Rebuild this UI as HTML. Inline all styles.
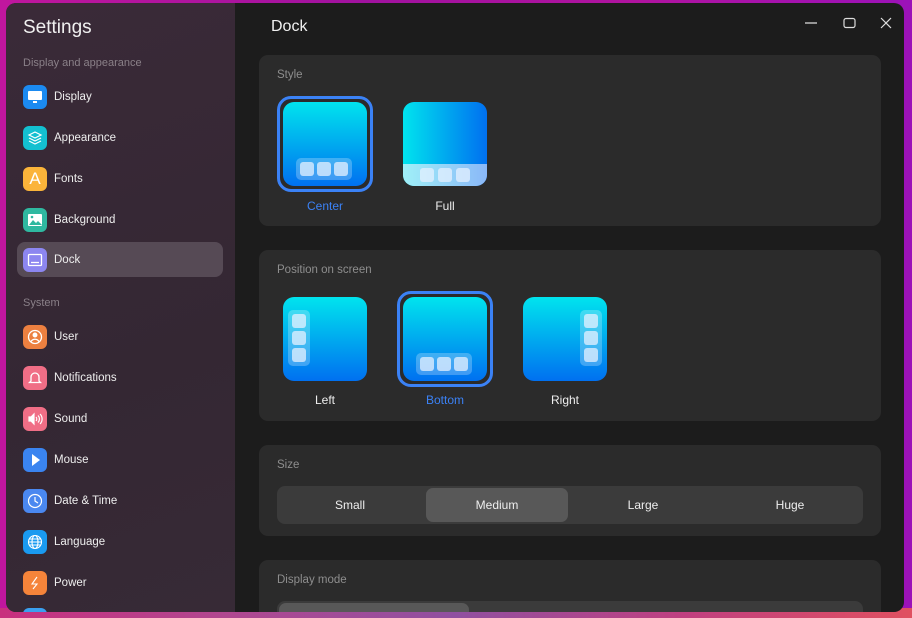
<!DOCTYPE html>
<html><head><style>
*{box-sizing:border-box;margin:0;padding:0}
body{width:912px;height:618px;overflow:hidden;font-family:"Liberation Sans","DejaVu Sans",sans-serif;background:linear-gradient(90deg,#c0169e 0%,#a0129f 40%,#b0139f 70%,#9b12b8 100%);position:relative}
.bot{position:absolute;left:0;right:0;bottom:0;height:10px;background:linear-gradient(90deg,#c8307e,#b04890,#9050a0,#c04080,#e05060)}
.win{position:absolute;left:6px;top:3px;width:898px;height:609px;border-radius:10px;overflow:hidden;background:#1c1c1c}
.side{position:absolute;left:0;top:0;width:229px;height:100%;background:linear-gradient(160deg,#3a2a38,#342733 60%,#372a36)}
.side h1{position:absolute;left:17px;top:14px;font-size:19px;font-weight:normal;color:#f0f0f0}
.sec{position:absolute;left:17px;font-size:11px;color:#8a8088}
.it{position:absolute;left:11px;width:206px;height:35px;border-radius:8px;display:flex;align-items:center;padding-left:6px;font-size:11.5px;color:#eee}
.it.sel{background:#564a55}
.ic{width:24px;height:24px;border-radius:6px;margin-right:7px;display:flex;align-items:center;justify-content:center}
.main{position:absolute;left:229px;top:0;right:0;bottom:0}
.title{position:absolute;left:36px;top:15px;font-size:16px;color:#f0f0f0}
.card{position:absolute;left:24px;width:622px;background:#2b2b2b;border-radius:9px}
.lab{position:absolute;left:18px;top:14px;font-size:11.5px;color:#8e8e8e}
.th{position:absolute;width:84px;height:84px;border-radius:11px;background:linear-gradient(#00e4ee,#0070f0);overflow:hidden}
.ring{position:absolute;width:96px;height:96px;border:3px solid #3b82f6;border-radius:14px}
.dock{position:absolute;background:rgba(255,255,255,.25);border-radius:5px;display:flex;gap:3px;padding:4px}
.dock.v{flex-direction:column}
.sq{width:14px;height:14px;border-radius:3px;background:rgba(230,240,255,.75)}
.tl{position:absolute;font-size:12px;color:#eee;text-align:center;width:84px}
.tl.b{color:#3b82f6}
.seg{position:absolute;left:18px;top:41px;width:586px;height:38px;background:#3b3b3b;border-radius:8px}
.sg{position:absolute;top:2px;height:34px;width:142px;border-radius:7px;color:#eee;font-size:12px;display:flex;align-items:center;justify-content:center}
</style></head><body>
<div class="bot"></div>
<div class="win">
<div class="side">
<h1>Settings</h1>
<div class="sec" style="top:54px">Display and appearance</div>
<div class="it" style="top:76px"><div class="ic" style="background:#1b8af0"><svg width="16" height="14"><rect x="1" y="1" width="14" height="9" fill="#fff" rx="1"/><rect x="6" y="11" width="4" height="2" fill="#fff"/></svg></div>Display</div>
<div class="it" style="top:117px"><div class="ic" style="background:#13c0d0"><svg width="16" height="16" fill="none" stroke="#fff" stroke-width="1.2"><path d="M8 2L14 5 8 8 2 5Z M2 8l6 3 6-3 M2 11l6 3 6-3"/></svg></div>Appearance</div>
<div class="it" style="top:158px"><div class="ic" style="background:#fbb43a;color:#fff;font-size:17px">A</div>Fonts</div>
<div class="it" style="top:199px"><div class="ic" style="background:#2fb8a0"><svg width="16" height="14"><rect x="1" y="1" width="14" height="12" fill="#fff" rx="1"/><path d="M2 12l4-5 3 3 2-2 4 4z" fill="#2fb8a0"/><circle cx="5" cy="4" r="1.3" fill="#2fb8a0"/></svg></div>Background</div>
<div class="it sel" style="top:239px"><div class="ic" style="background:#8c86f0"><svg width="16" height="14" fill="none" stroke="#fff" stroke-width="1.3"><rect x="1.5" y="1.5" width="13" height="11" rx="1"/><path d="M4 9.5h8"/></svg></div>Dock</div>
<div class="sec" style="top:294px">System</div>
<div class="it" style="top:316px"><div class="ic" style="background:#ec8040"><svg width="16" height="16" fill="none" stroke="#fff" stroke-width="1.3"><circle cx="8" cy="8" r="6.5"/><circle cx="8" cy="6" r="1.8" fill="#fff"/><path d="M4 12.5c2-3 6-3 8 0"/></svg></div>User</div>
<div class="it" style="top:357px"><div class="ic" style="background:#f06e86"><svg width="16" height="16" fill="none" stroke="#fff" stroke-width="1.3"><path d="M4 11V7a4 4 0 018 0v4l1.5 1.5h-11z"/></svg></div>Notifications</div>
<div class="it" style="top:398px"><div class="ic" style="background:#f06e86"><svg width="16" height="16" fill="none" stroke="#fff" stroke-width="1.2"><path d="M2 6h2l3-3v10l-3-3H2z" fill="#fff"/><path d="M9 6a3 3 0 010 4M11 4.5a5 5 0 010 7M13 3a7 7 0 010 10"/></svg></div>Sound</div>
<div class="it" style="top:439px"><div class="ic" style="background:#3a84f0"><svg width="16" height="16"><path d="M5 2v12l8-6z" fill="#fff"/></svg></div>Mouse</div>
<div class="it" style="top:480px"><div class="ic" style="background:#4a88f0"><svg width="16" height="16" fill="none" stroke="#fff" stroke-width="1.2"><circle cx="8" cy="8" r="6.5"/><path d="M8 4v4l3 2"/></svg></div>Date &amp; Time</div>
<div class="it" style="top:521px"><div class="ic" style="background:#1a9af0"><svg width="16" height="16" fill="none" stroke="#fff" stroke-width="1.1"><circle cx="8" cy="8" r="6.5"/><ellipse cx="8" cy="8" rx="3" ry="6.5"/><path d="M1.5 8h13M2.5 5h11M2.5 11h11"/></svg></div>Language</div>
<div class="it" style="top:562px"><div class="ic" style="background:#f5843a"><svg width="16" height="16" fill="none" stroke="#fff" stroke-width="1.1"><path d="M10 2L5 9h5l-4 5"/></svg></div>Power</div>
<div class="ic" style="position:absolute;left:17px;top:605px;background:#3aa0f0"></div>
</div>
<div class="main">
<div class="title">Dock</div>
<svg style="position:absolute;left:565px;top:12px" width="100" height="16" fill="none" stroke="#ddd" stroke-width="1.2"><path d="M5 8h12"/><rect x="44" y="3.5" width="11" height="9" rx="2"/><path d="M81 3l10 10M91 3L81 13"/></svg>
<div class="card" style="top:52px;height:171px">
<div class="lab">Style</div>
<div class="ring" style="left:18px;top:41px"></div>
<div class="th" style="left:24px;top:47px"><div class="dock" style="left:13px;top:56px"><div class="sq"></div><div class="sq"></div><div class="sq"></div></div></div>
<div class="tl b" style="left:24px;top:144px">Center</div>
<div class="th" style="left:144px;top:47px;background:linear-gradient(90deg,#00e4ee,#0070f0)"><div style="position:absolute;left:0;right:0;bottom:0;height:22px;background:linear-gradient(90deg,#a0f0f8,#8ab8f8);display:flex;gap:4px;justify-content:center;align-items:center"><div class="sq"></div><div class="sq"></div><div class="sq"></div></div></div>
<div class="tl" style="left:144px;top:144px">Full</div>
</div>
<div class="card" style="top:247px;height:171px">
<div class="lab">Position on screen</div>
<div class="th" style="left:24px;top:47px"><div class="dock v" style="left:5px;top:13px"><div class="sq"></div><div class="sq"></div><div class="sq"></div></div></div>
<div class="tl" style="left:24px;top:143px">Left</div>
<div class="ring" style="left:138px;top:41px"></div>
<div class="th" style="left:144px;top:47px"><div class="dock" style="left:13px;top:56px"><div class="sq"></div><div class="sq"></div><div class="sq"></div></div></div>
<div class="tl b" style="left:144px;top:143px">Bottom</div>
<div class="th" style="left:264px;top:47px"><div class="dock v" style="left:57px;top:13px"><div class="sq"></div><div class="sq"></div><div class="sq"></div></div></div>
<div class="tl" style="left:264px;top:143px">Right</div>
</div>
<div class="card" style="top:442px;height:91px">
<div class="lab">Size</div>
<div class="seg"><div class="sg" style="left:2px">Small</div><div class="sg" style="left:149px;background:#585858">Medium</div><div class="sg" style="left:295px">Large</div><div class="sg" style="left:442px">Huge</div></div>
</div>
<div class="card" style="top:557px;height:80px">
<div class="lab">Display mode</div>
<div class="seg"><div class="sg" style="left:2px;width:190px;background:#585858"></div></div>
</div>
</div>
</div>
</body></html>
